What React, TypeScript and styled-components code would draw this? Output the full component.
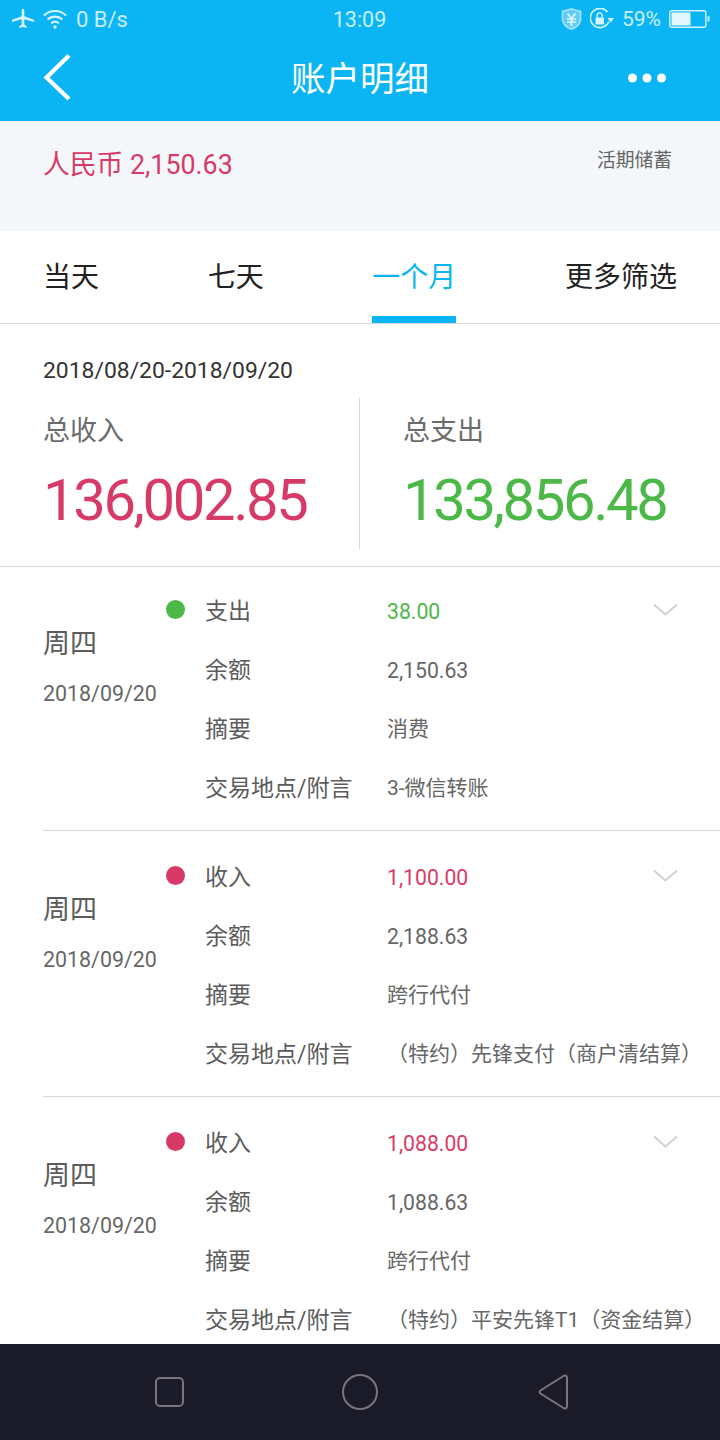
import React from 'react';
import styled, { createGlobalStyle } from 'styled-components';

const FONT = 'Roboto, "Noto Sans CJK SC", sans-serif';

const GlobalStyle = createGlobalStyle`
  html, body { margin: 0; padding: 0; background: #fff; }
  body { font-family: ${FONT}; }
  * { box-sizing: border-box; }
`;

const Screen = styled.div`
  width: 720px;
  height: 1440px;
  display: flex;
  flex-direction: column;
  overflow: hidden;
  background: #fff;
`;

const Top = styled.div`
  height: 121px;
  flex: none;
  background: #0bb5f4;
`;

const StatusBar = styled.div`
  height: 38px;
  padding: 0 13px 0 12px;
  display: grid;
  grid-template-columns: 1fr auto 1fr;
  align-items: center;
  color: #c6eefd;
  font-size: 22px;
`;

const StatusGroup = styled.div<{ $end?: boolean }>`
  display: flex;
  align-items: center;
  justify-content: ${(p) => (p.$end ? 'flex-end' : 'flex-start')};
  gap: ${(p) => (p.$end ? '8px' : '9px')};
  margin-right: ${(p) => (p.$end ? '-4px' : '0')};
`;

const Clock = styled.span`
  font-size: 21.5px;
`;

const Percent = styled.span`
  font-size: 21px;
`;

const NavBar = styled.div`
  height: 83px;
  padding: 0 43px 4px;
  display: grid;
  grid-template-columns: 1fr auto 1fr;
  align-items: center;
`;

const BackIcon = styled.svg`
  display: block;
  margin-bottom: 2px;
`;

const MoreIcon = styled.svg`
  justify-self: end;
  margin-right: 11px;
`;

const PageTitle = styled.div`
  color: #fff;
  font-size: 34.5px;
  line-height: 44px;
  padding-top: 2px;
`;

const Balance = styled.div`
  height: 110px;
  flex: none;
  background: #f3f7fa;
  padding: 24px 48px 0 43px;
  display: flex;
  justify-content: space-between;
  align-items: flex-start;
`;

const BalanceAmount = styled.div`
  color: #d83a68;
  font-size: 26.8px;
  line-height: 40px;
`;

const AccountType = styled.div`
  color: #666;
  font-size: 18.8px;
  line-height: 32px;
`;

const Tabs = styled.div`
  height: 93px;
  flex: none;
  border-bottom: 1px solid #d8d8d8;
  padding: 0 43px;
  display: flex;
  justify-content: space-between;
`;

const Tab = styled.div<{ $active?: boolean }>`
  height: 92px;
  padding-top: 27px;
  font-size: 28px;
  line-height: 40px;
  color: ${(p) => (p.$active ? '#0bb5f4' : '#222')};
  border-bottom: 7px solid ${(p) => (p.$active ? '#0bb5f4' : 'transparent')};
`;

const Summary = styled.div`
  height: 243px;
  flex: none;
  border-bottom: 1px solid #d8d8d8;
  padding: 29px 0 0 43px;
`;

const DateRange = styled.div`
  color: #333;
  font-size: 22.9px;
  line-height: 36px;
`;

const Totals = styled.div`
  display: grid;
  grid-template-columns: 316px 1fr;
  margin-top: 9px;
`;

const Total = styled.div<{ $divided?: boolean }>`
  height: 151px;
  padding-left: ${(p) => (p.$divided ? '43px' : '0')};
  border-left: ${(p) => (p.$divided ? '1px solid #d8d8d8' : 'none')};
`;

const TotalLabel = styled.div`
  color: #6b6b6b;
  font-size: 27px;
  line-height: 40px;
  padding-top: 13px;
`;

const TotalValue = styled.div<{ $color: string }>`
  color: ${(p) => p.$color};
  font-size: 58px;
  letter-spacing: -2.4px;
  line-height: 70px;
  margin-top: 14px;
`;

const List = styled.div`
  flex: 1;
  min-height: 0;
  overflow: hidden;
`;

const Record = styled.div<{ $last?: boolean }>`
  position: relative;
  height: 266px;
  margin-left: 43px;
  padding-top: 17px;
  display: flex;
  border-bottom: ${(p) => (p.$last ? 'none' : '1px solid #d8d8d8')};
  &:first-child { margin-top: -2px; }
`;

const DateColumn = styled.div`
  width: 162px;
  flex: none;
  padding-top: 42px;
`;

const Weekday = styled.div`
  color: #5c5c5c;
  font-size: 27px;
  line-height: 40px;
`;

const RecordDate = styled.div`
  color: #666;
  font-size: 21.4px;
  line-height: 32px;
  margin-top: 14px;
`;

const Dot = styled.span<{ $color: string }>`
  position: absolute;
  left: 123px;
  top: 35px;
  width: 19px;
  height: 19px;
  border-radius: 50%;
  background: ${(p) => p.$color};
`;

const Rows = styled.div`
  flex: 1;
`;

const Row = styled.div`
  height: 59px;
  display: flex;
  align-items: center;
  white-space: nowrap;
`;

const RowLabel = styled.div`
  width: 182px;
  flex: none;
  padding: 0 0 6px 0;
  color: #5c5c5c;
  font-size: 23px;
`;

const RowValue = styled.div<{ $color?: string; $cjk?: boolean }>`
  color: ${(p) => p.$color || '#666'};
  font-size: ${(p) => (p.$cjk ? '21px' : '21.2px')};
  padding-bottom: ${(p) => (p.$cjk ? '5px' : '1px')};
`;

const Chevron = styled.svg`
  position: absolute;
  left: 610px;
  top: 38px;
`;

const SystemNav = styled.div`
  height: 96px;
  flex: none;
  background: #1a1a28;
  display: grid;
  grid-template-columns: 184px 194px 190px;
  justify-content: start;
  align-items: center;
`;

const SystemKey = styled.div`
  display: flex;
  justify-content: flex-end;
`;

const GREEN = '#4cb848';
const RED = '#d83a68';

const records = [
  { type: '支出', color: GREEN, amount: '38.00', balance: '2,150.63', memo: '消费', place: '3-微信转账' },
  { type: '收入', color: RED, amount: '1,100.00', balance: '2,188.63', memo: '跨行代付', place: '（特约）先锋支付（商户清结算）' },
  { type: '收入', color: RED, amount: '1,088.00', balance: '1,088.63', memo: '跨行代付', place: '（特约）平安先锋T1（资金结算）' },
];

const Plane = () => (
  <svg width="22" height="20" viewBox="0 0 22 20" fill="#d6f3fe">
    <path d="M9.700 1.500C9.700.6 10.200 0 11 0s1.300.6 1.300 1.500v5.700L22 10.800v2.100l-9.700-2.600v5.200l2.500 2V19L11 18l-3.800 1v-1.500l2.500-2v-5.200L0 12.900v-2.100l9.700-3.600z" />
  </svg>
);

const Wifi = () => (
  <svg width="24" height="20" viewBox="0 0 24 20" fill="none" stroke="#d6f3fe" strokeWidth="2.200">
    <path d="M1 6.500c6.400-6 15.600-6 22 0" />
    <path d="M4.600 10.500c4.300-3.900 10.500-3.900 14.800 0" />
    <path d="M8.200 14.300c2.300-1.900 5.300-1.900 7.600 0" />
    <circle cx="12" cy="18" r="1.700" fill="#d6f3fe" stroke="none" />
  </svg>
);

const Shield = () => (
  <svg width="21" height="22" viewBox="0 0 21 22" fill="none" stroke="#9fe2fb" strokeWidth="1.800">
    <path d="M10.500 1l9 2.500v7.500c0 5-4 8.300-9 10.200-5-1.900-9-5.200-9-10.200V3.500z" fill="#5fcdf7" />
    <path d="M6.500 5.500l4 5 4-5M6 11h9M6 14h9M10.500 10.500V18" strokeWidth="1.700" stroke="#e4f7fe" />
  </svg>
);

const LockRotate = () => (
  <svg width="24" height="22" viewBox="0 0 24 22" fill="none">
    <path d="M18.900 13.500A9.600 9.600 0 1 1 17.500 4" stroke="#d6f3fe" strokeWidth="1.600" />
    <path d="M17.500 10h6.500l-3.200 4.500z" fill="#d6f3fe" />
    <rect x="5.500" y="9.500" width="8.500" height="7" rx="1" fill="#d6f3fe" />
    <path d="M7.200 9.500V7.400a2.500 2.500 0 0 1 5 0v2.100" stroke="#d6f3fe" strokeWidth="1.400" />
  </svg>
);

const Battery = () => (
  <svg width="42" height="20" viewBox="0 0 42 20">
    <rect x=".8" y="1.800" width="36" height="16.500" rx="2" fill="none" stroke="#d6f3fe" strokeWidth="1.400" />
    <rect x="2.500" y="3.500" width="19" height="13" fill="#e4f7fe" />
    <rect x="38.500" y="6.800" width="2" height="6" rx="1" fill="#c6eefd" />
  </svg>
);

const App: React.FC = () => (
  <Screen>
    <GlobalStyle />
    <Top>
      <StatusBar>
        <StatusGroup>
          <Plane />
          <Wifi />
          <span>0 B/s</span>
        </StatusGroup>
        <Clock>13:09</Clock>
        <StatusGroup $end>
          <Shield />
          <LockRotate />
          <Percent>59%</Percent>
          <Battery />
        </StatusGroup>
      </StatusBar>
      <NavBar>
        <BackIcon width="28" height="48" viewBox="0 0 28 48" fill="none" stroke="#fff" strokeWidth="4.200">
          <path d="M26 2.500L3.500 24.500 26 46" />
        </BackIcon>
        <PageTitle>账户明细</PageTitle>
        <MoreIcon width="38" height="10" viewBox="0 0 38 10" fill="#fff">
          <circle cx="4.500" cy="5" r="4.500" />
          <circle cx="19" cy="5" r="4.500" />
          <circle cx="33.500" cy="5" r="4.500" />
        </MoreIcon>
      </NavBar>
    </Top>
    <Balance>
      <BalanceAmount>人民币 2,150.63</BalanceAmount>
      <AccountType>活期储蓄</AccountType>
    </Balance>
    <Tabs>
      <Tab>当天</Tab>
      <Tab>七天</Tab>
      <Tab $active>一个月</Tab>
      <Tab>更多筛选</Tab>
    </Tabs>
    <Summary>
      <DateRange>2018/08/20-2018/09/20</DateRange>
      <Totals>
        <Total>
          <TotalLabel>总收入</TotalLabel>
          <TotalValue $color={RED}>136,002.85</TotalValue>
        </Total>
        <Total $divided>
          <TotalLabel>总支出</TotalLabel>
          <TotalValue $color={GREEN}>133,856.48</TotalValue>
        </Total>
      </Totals>
    </Summary>
    <List>
      {records.map((r, i) => (
        <Record key={r.amount} $last={i === records.length - 1}>
          <Dot $color={r.color} />
          <DateColumn>
            <Weekday>周四</Weekday>
            <RecordDate>2018/09/20</RecordDate>
          </DateColumn>
          <Rows>
            <Row>
              <RowLabel>{r.type}</RowLabel>
              <RowValue $color={r.color}>{r.amount}</RowValue>
            </Row>
            <Row>
              <RowLabel>余额</RowLabel>
              <RowValue>{r.balance}</RowValue>
            </Row>
            <Row>
              <RowLabel>摘要</RowLabel>
              <RowValue $cjk>{r.memo}</RowValue>
            </Row>
            <Row>
              <RowLabel>交易地点/附言</RowLabel>
              <RowValue $cjk>{r.place}</RowValue>
            </Row>
          </Rows>
          <Chevron width="25" height="13" viewBox="0 0 25 13" fill="none" stroke="#d0d0d0" strokeWidth="1.800">
            <path d="M1 1.500l11.500 10L24 1.500" />
          </Chevron>
        </Record>
      ))}
    </List>
    <SystemNav>
      <SystemKey>
        <svg width="29" height="30" viewBox="0 0 29 30" fill="none" stroke="#77767e" strokeWidth="2">
          <rect x="1" y="1" width="27" height="28" rx="4" />
        </svg>
      </SystemKey>
      <SystemKey>
        <svg width="36" height="36" viewBox="0 0 36 36" fill="none" stroke="#77767e" strokeWidth="2">
          <circle cx="18" cy="18" r="17" />
        </svg>
      </SystemKey>
      <SystemKey>
        <svg width="30" height="36" viewBox="0 0 30 36" fill="none" stroke="#77767e" strokeWidth="2" strokeLinejoin="round">
          <path d="M2.500 16.500L25.500 2c1.500-.9 3.500-.3 3.500 1.500v29c0 1.800-2 2.400-3.500 1.500L2.500 19.500c-1.300-.8-1.300-2.200 0-3z" />
        </svg>
      </SystemKey>
    </SystemNav>
  </Screen>
);

export default App;
